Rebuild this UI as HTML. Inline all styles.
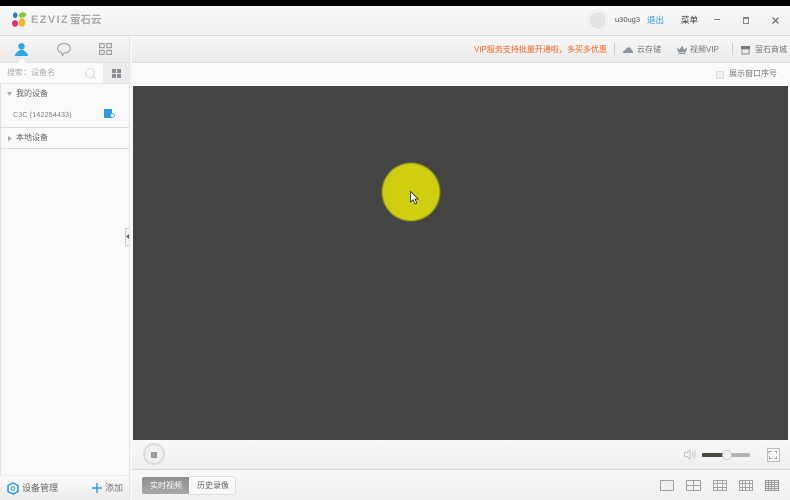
<!DOCTYPE html>
<html>
<head>
<meta charset="utf-8">
<style>
html,body{margin:0;padding:0;background:#000;}
body{width:790px;height:500px;overflow:hidden;position:relative;font-family:"Liberation Sans","Noto Sans CJK SC",sans-serif;font-size:8px;color:#666;}
.a{position:absolute;white-space:nowrap;}
.t{filter:blur(.3px);}
svg{position:absolute;overflow:visible;}
</style>
</head>
<body>
<!-- base -->
<div class="a" style="left:0;top:6px;width:790px;height:494px;background:#f9f9f9;"></div>
<div class="a" style="left:0;top:6px;width:1px;height:494px;background:#e0e0e0;"></div>
<!-- title bar -->
<div class="a" style="left:0;top:6px;width:790px;height:29px;background:linear-gradient(#f8f8f8,#f1f1f1);border-bottom:1px solid #d8d8d8;"></div>
<!-- logo -->
<svg class="t" style="left:12px;top:12px" width="16" height="16" viewBox="0 0 16 16">
<ellipse cx="3.200" cy="3.200" rx="2.300" ry="2.900" fill="#2a80c8"/>
<ellipse cx="10.500" cy="3" rx="4" ry="2.500" fill="#8cc63e" transform="rotate(-12 10.500 3)"/>
<ellipse cx="3" cy="11.500" rx="3" ry="3.300" fill="#e8267f"/>
<ellipse cx="10" cy="10.500" rx="3.300" ry="4.300" fill="#f5b51e"/>
</svg>
<div class="a t" style="left:31px;top:14px;font-size:11px;line-height:12px;color:#aaa;font-weight:bold;letter-spacing:1.400px;">EZVIZ</div>
<div class="a t" style="left:70px;top:13.500px;font-size:10.500px;line-height:13px;color:#a8a8a8;font-weight:bold;">萤石云</div>
<!-- user -->
<div class="a" style="left:587px;top:10px;width:19px;height:19px;border-radius:50%;background:#e4e4e4;border:1px solid #e9e9e9;box-shadow:inset 0 0 0 1px #fff;"></div>
<div class="a t" style="left:615px;top:14px;line-height:12px;color:#555;font-size:7.500px;">u30ug3</div>
<div class="a t" style="left:647px;top:14px;line-height:12px;color:#2a9be0;font-size:8.500px;">退出</div>
<div class="a t" style="left:681px;top:14px;line-height:12px;color:#333;font-size:8.500px;">菜单</div>
<div class="a" style="left:714px;top:19px;width:6px;height:1px;background:#888;"></div>
<div class="a" style="left:743px;top:17px;width:4px;height:4px;border:1px solid #888;border-top-width:2px;"></div>
<svg style="left:772px;top:17px" width="7" height="7" viewBox="0 0 7 7"><path d="M.5 .5L6.500 6.500M6.500 .5L.5 6.500" stroke="#777" stroke-width="1.400"/></svg>

<!-- sidebar -->
<div class="a" style="left:0;top:36px;width:129px;height:26px;background:linear-gradient(#f6f6f6,#e9e9e9);border-bottom:1px solid #e0e0e0;"></div>
<svg style="left:15px;top:43px" width="13" height="13" viewBox="0 0 13 13"><circle cx="6.500" cy="3.300" r="3.200" fill="#2fa6e8"/><path d="M0 13C0 9.500 3.500 8.500 4.500 7H8.500C9.500 8.500 13 9.500 13 13Z" fill="#2fa6e8"/></svg>
<svg style="left:18px;top:58px" width="8" height="5"><path d="M0 5L4 0L8 5Z" fill="#fbfbfb"/></svg>
<svg style="left:57px;top:43px" width="14" height="13" viewBox="0 0 14 13"><path d="M7 .6C3.400 .6 .6 2.500 .6 5.300C.6 7.600 2.400 9 4.400 9.600L5.600 12.400L7.200 10C10.800 10 13.400 8.200 13.400 5.300C13.400 2.500 10.600 .6 7 .6Z" fill="none" stroke="#a0a0a0" stroke-width="1.100"/></svg>
<svg style="left:99px;top:43px" width="13" height="12" viewBox="0 0 13 12" fill="none" stroke="#a0a0a0" stroke-width="1.200"><rect x=".6" y=".6" width="4.600" height="4"/><rect x="7.800" y=".6" width="4.600" height="4"/><rect x=".6" y="7.400" width="4.600" height="4"/><rect x="7.800" y="7.400" width="4.600" height="4"/></svg>
<!-- search row -->
<div class="a" style="left:0;top:63px;width:129px;height:20px;background:#fbfbfb;border-bottom:1px solid #e2e2e2;"></div>
<div class="a t" style="left:7px;top:67px;line-height:12px;color:#aaa;">搜索：设备名</div>
<svg style="left:85px;top:68px" width="12" height="11" viewBox="0 0 12 11"><circle cx="5" cy="5" r="4.500" fill="none" stroke="#ddd"/><path d="M8.500 8.500L11 11" stroke="#ddd"/></svg>
<div class="a" style="left:103px;top:63px;width:26px;height:20px;background:#ececec;"></div>
<svg style="left:112px;top:69px" width="9" height="9"><rect width="4" height="4" fill="#8a8f96"/><rect x="5" width="4" height="4" fill="#8a8f96"/><rect y="5" width="4" height="4" fill="#8a8f96"/><rect x="5" y="5" width="4" height="4" fill="#8a8f96"/></svg>
<!-- tree -->
<svg style="left:7px;top:92px" width="5" height="4"><path d="M0 0H5L2.500 4Z" fill="#aaa"/></svg>
<div class="a t" style="left:16px;top:88px;line-height:12px;color:#666;">我的设备</div>
<div class="a t" style="left:13px;top:109px;line-height:12px;color:#888;font-size:7.200px;letter-spacing:.1px;">C3C (142254433)</div>
<div class="a" style="left:104px;top:109px;width:8px;height:9px;background:#2a9be0;"></div>
<div class="a" style="left:110px;top:113px;width:3px;height:3px;border:1px solid #58b4ea;border-radius:50%;background:#fff;"></div>
<div class="a" style="left:0;top:127px;width:129px;height:1px;background:#ddd;"></div>
<svg style="left:8px;top:136px" width="4" height="5"><path d="M0 0L4 2.500L0 5Z" fill="#aaa"/></svg>
<div class="a t" style="left:16px;top:132px;line-height:12px;color:#666;">本地设备</div>
<div class="a" style="left:0;top:148px;width:129px;height:1px;background:#ddd;"></div>
<!-- sidebar bottom -->
<div class="a" style="left:0;top:475px;width:129px;height:25px;background:linear-gradient(#f9f9f9,#ececec);border-top:1px solid #eee;box-sizing:border-box;"></div>
<svg style="left:7px;top:482px" width="12" height="13" viewBox="0 0 12 13"><path d="M6 1L11 3.500V9.500L6 12L1 9.500V3.500Z" fill="none" stroke="#2a9be0" stroke-width="1.500"/><circle cx="6" cy="6.500" r="1.800" fill="none" stroke="#2a9be0"/></svg>
<div class="a t" style="left:22px;top:482px;line-height:13px;font-size:9px;color:#666;">设备管理</div>
<svg style="left:92px;top:483px" width="10" height="10"><path d="M5 0V10M0 5H10" stroke="#2a9be0" stroke-width="1.400"/></svg>
<div class="a t" style="left:105px;top:482px;line-height:13px;font-size:9px;color:#777;">添加</div>
<!-- divider -->
<div class="a" style="left:129px;top:36px;width:1px;height:464px;background:#e4e4e4;"></div>
<div class="a" style="left:130px;top:36px;width:2px;height:464px;background:#f6f6f6;"></div>
<div class="a" style="left:125px;top:228px;width:3px;height:16px;border:1px solid #ccc;border-right:none;background:#f4f4f4;"></div>
<svg style="left:126px;top:234px" width="3" height="5"><path d="M3 0L0 2.500L3 5Z" fill="#666"/></svg>

<!-- right toolbar -->
<div class="a" style="left:132px;top:36px;width:658px;height:26px;background:linear-gradient(#f7f7f7,#eaeaea);border-bottom:1px solid #dcdcdc;"></div>
<div class="a t" style="left:474px;top:44px;line-height:12px;color:#f4661b;font-size:8px;">VIP服务支持批量开通啦，多买多优惠</div>
<div class="a" style="left:614px;top:43px;width:1px;height:12px;background:#ccc;"></div>
<svg style="left:623px;top:47px" width="10" height="6" viewBox="0 0 11 7" preserveAspectRatio="none"><path d="M0 7C0 4.500 1.500 4 2.500 4C3 1.500 5 0 7 .5C9 1 9 3 9.500 3.500C10.500 4 11 5.500 11 7Z" fill="#8e959c"/></svg>
<div class="a t" style="left:637px;top:44px;line-height:12px;color:#777;">云存储</div>
<svg style="left:677px;top:46px" width="10" height="8" viewBox="0 0 10 9" preserveAspectRatio="none"><path d="M0 1.500L2.500 4L5 0L7.500 4L10 1.500L9 7H1Z" fill="#8e959c"/><rect x="1.500" y="7.800" width="7" height="1.200" fill="#8e959c"/></svg>
<div class="a t" style="left:690px;top:44px;line-height:12px;color:#777;">视频VIP</div>
<div class="a" style="left:732px;top:43px;width:1px;height:12px;background:#ccc;"></div>
<svg style="left:741px;top:46px" width="9" height="8" viewBox="0 0 9 8"><rect width="9" height="3" fill="#777"/><rect x="1" y="3" width="7" height="5" fill="none" stroke="#888"/></svg>
<div class="a t" style="left:755px;top:44px;line-height:12px;color:#777;">萤石商城</div>
<!-- options row -->
<div class="a" style="left:132px;top:63px;width:658px;height:23px;background:#fafafa;"></div>
<div class="a" style="left:716px;top:71px;width:6px;height:6px;background:#eee;border:1px solid #ddd;"></div>
<div class="a t" style="left:729px;top:68px;line-height:12px;color:#777;">展示窗口序号</div>

<!-- video -->
<div class="a" style="left:133px;top:86px;width:655px;height:354px;background:#444443;"></div>
<div class="a" style="left:382px;top:162.500px;width:58px;height:58px;border-radius:50%;background:#cfcf10;filter:blur(.7px);"></div>
<svg style="left:410px;top:191px" width="9" height="14" viewBox="0 0 9 14"><path d="M.5 .5V11L3 8.800L5 13L6.800 12.200L5 8H8.200Z" fill="#fff" stroke="#222" stroke-width=".8"/></svg>

<!-- control bar -->
<div class="a" style="left:132px;top:440px;width:658px;height:29px;background:linear-gradient(#f8f8f8,#efefef);border-bottom:1px solid #d6d6d6;"></div>
<div class="a" style="left:143px;top:443px;width:18px;height:18px;border:2px solid #dcdcdc;border-radius:50%;background:#f0f0f0;"></div>
<div class="a" style="left:151px;top:452px;width:6px;height:6px;background:#9a9a9a;"></div>
<svg style="left:684px;top:449px" width="12" height="11" viewBox="0 0 12 11" fill="none" stroke="#c4c4c4"><path d="M.5 3.500H3L6 1V10L3 7.500H.5Z"/><path d="M8 3C9 4.500 9 6.500 8 8M10 1.500C11.500 4 11.500 7 10 9.500"/></svg>
<div class="a" style="left:702px;top:453px;width:48px;height:4px;background:#b5b5b5;border-radius:1px;"></div>
<div class="a" style="left:702px;top:453px;width:24px;height:4px;background:#4a4a45;border-radius:1px;"></div>
<div class="a" style="left:722px;top:450px;width:8px;height:8px;border-radius:50%;background:#f4f4f4;border:1px solid #ccc;"></div>
<div class="a" style="left:767px;top:448px;width:11px;height:12px;border:1px solid #bbb;background:#f7f7f7;"></div>
<svg style="left:769px;top:451px" width="8" height="8" viewBox="0 0 9 9" fill="none" stroke="#999"><path d="M0 3V.5H3M6 .5H8.500V3M8.500 6V8.500H6M3 8.500H.5V6"/></svg>

<!-- bottom bar -->
<div class="a" style="left:132px;top:470px;width:658px;height:30px;background:linear-gradient(#f7f7f7,#f0f0f0);"></div>
<div class="a" style="left:142px;top:477px;width:47px;height:17px;background:linear-gradient(#8e8e8e,#a8a8a8);border-radius:2px 0 0 2px;"></div>
<div class="a" style="left:189px;top:476px;width:46px;height:17px;background:#f8f8f8;border:1px solid #ddd;border-left:none;border-radius:0 3px 3px 0;"></div>
<div class="a t" style="left:150px;top:480px;line-height:12px;color:#fff;">实时视频</div>
<div class="a t" style="left:197px;top:480px;line-height:12px;color:#666;">历史录像</div>
<svg style="left:660px;top:480px" width="130" height="12" fill="none" stroke="#aaa" stroke-width="1" shape-rendering="crispEdges">
<rect x=".5" y=".5" width="13" height="10" rx="1" fill="#f0f0f0" stroke="#a0a0a0"/>
<g stroke="#a0a0a0"><rect x="26.500" y=".5" width="14" height="10" rx="1"/><path d="M26.500 5.500H40.500M33.500 .5V10.500"/></g>
<g stroke="#a5a5a5"><rect x="53.500" y=".5" width="13" height="10"/><path d="M53.500 3.500H66.500M53.500 7.500H66.500M57.500 .5V10.500M62.500 .5V10.500"/></g>
<g stroke="#a5a5a5"><rect x="79.500" y=".5" width="13" height="10"/><path d="M79.500 3.500H92.500M79.500 7.500H92.500M82.500 .5V10.500M85.500 .5V10.500M89.500 .5V10.500"/></g>
<g stroke="#999"><rect x="105.500" y=".5" width="13" height="10"/><path d="M105.500 2.500H118.500M105.500 4.500H118.500M105.500 6.500H118.500M105.500 8.500H118.500M108.500 .5V10.500M111.500 .5V10.500M114.500 .5V10.500"/></g>
</svg>
</body>
</html>
